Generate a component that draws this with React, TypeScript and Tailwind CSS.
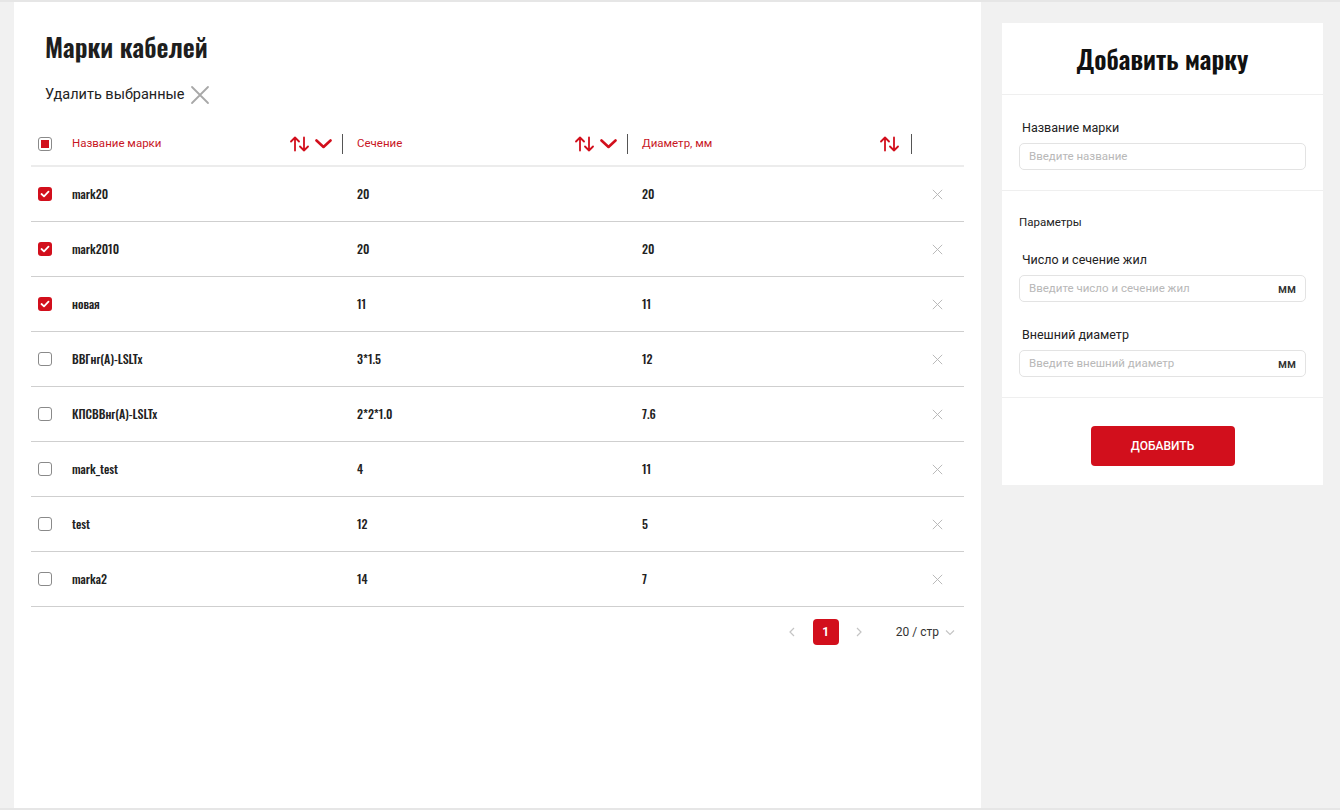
import React from "react";

const RED = "#d20f1c";

const rows = [
  { name: "mark20", section: "20", diam: "20", checked: true },
  { name: "mark2010", section: "20", diam: "20", checked: true },
  { name: "новая", section: "11", diam: "11", checked: true },
  { name: "ВВГнг(А)-LSLTx", section: "3*1.5", diam: "12", checked: false },
  { name: "КПСВВнг(А)-LSLTx", section: "2*2*1.0", diam: "7.6", checked: false },
  { name: "mark_test", section: "4", diam: "11", checked: false },
  { name: "test", section: "12", diam: "5", checked: false },
  { name: "marka2", section: "14", diam: "7", checked: false },
];

const condensed = {
  fontFamily: "Oswald, 'Liberation Sans Narrow', 'DejaVu Sans Condensed', sans-serif",
} as const;

function SortIcon() {
  return (
    <svg width="19" height="16" viewBox="0 0 19 16" fill="none" stroke={RED} strokeWidth="1.8" strokeLinecap="round" strokeLinejoin="round">
      <path d="M5 14.5V1.5M1 5.5L5 1.5L9 5.5" />
      <path d="M14 1.5V14.5M10 10.5L14 14.5L18 10.5" />
    </svg>
  );
}

function Chevron() {
  return (
    <svg width="17" height="10" viewBox="0 0 17 10" fill="none" stroke={RED} strokeWidth="2.6" strokeLinecap="round" strokeLinejoin="round">
      <path d="M1.5 1.5L8.5 8L15.5 1.5" />
    </svg>
  );
}

function Checkbox({ checked }: { checked: boolean }) {
  if (checked) {
    return (
      <span className="flex h-[14px] w-[14px] items-center justify-center rounded-[3px] bg-[#d20f1c]">
        <svg width="10" height="8" viewBox="0 0 10 8" fill="none" stroke="white" strokeWidth="1.8" strokeLinecap="round" strokeLinejoin="round">
          <path d="M1.5 4L4 6.3L8.5 1.7" />
        </svg>
      </span>
    );
  }
  return <span className="block h-[14px] w-[14px] rounded-[3px] border border-[#8a8a8a] bg-white" />;
}

function CloseIcon({ size, color, width }: { size: number; color: string; width: number }) {
  return (
    <svg width={size} height={size} viewBox="0 0 20 20" fill="none" stroke={color} strokeWidth={width} strokeLinecap="round">
      <path d="M2 2L18 18M18 2L2 18" />
    </svg>
  );
}

function Field({ label, placeholder, unit }: { label: string; placeholder: string; unit?: string }) {
  return (
    <div>
      <div className="pl-[3px] text-[12.5px] leading-[16px] text-[#222]">{label}</div>
      <div className="mt-[7px] flex h-[27px] items-center rounded-[5px] border border-[#e3e3e3] px-[9px]">
        <span className="flex-1 text-[11.5px] text-[#b8b8b8]">{placeholder}</span>
        {unit && <span className="text-[12px] font-medium text-[#333]">{unit}</span>}
      </div>
    </div>
  );
}

export default function App() {
  return (
    <div
      className="flex h-[810px] w-full border-y-2 border-[#e6e6e6] bg-[#f1f1f1]"
      style={{ fontFamily: "Roboto, Inter, 'Noto Sans', sans-serif" }}
    >
      <div className="ml-[14px] w-[967px] bg-white pl-[17px] pr-[17px]">
        <h1 className="ml-[14px] mt-[27px] text-[26px] font-semibold leading-[36px] text-[#1e1e1e]" style={condensed}>
          Марки кабелей
        </h1>
        <div className="ml-[14px] mt-[20px] flex items-center gap-[5px] text-[14.5px] leading-[20px] text-[#222]">
          <span>Удалить выбранные</span>
          <CloseIcon size={20} color="#a8a8a8" width={1.8} />
        </div>

        <div className="mt-[18px] w-[933px]">
          <div className="flex h-[44px] items-center border-b-2 border-[#ececec] text-[11.5px] text-[#c8161f]">
            <div className="flex w-[41px] pl-[7px]">
              <span className="flex h-[14px] w-[14px] items-center justify-center rounded-[3px] border border-[#8a8a8a]">
                <span className="block h-[8px] w-[8px] bg-[#d20f1c]" />
              </span>
            </div>
            <div className="flex w-[271px] items-center">
              <span className="flex-1">Название марки</span>
              <SortIcon />
              <span className="ml-[6px]"><Chevron /></span>
              <span className="ml-[10px] h-[20px] w-px bg-[#555]" />
            </div>
            <div className="ml-[14px] flex w-[271px] items-center">
              <span className="flex-1">Сечение</span>
              <SortIcon />
              <span className="ml-[6px]"><Chevron /></span>
              <span className="ml-[10px] h-[20px] w-px bg-[#555]" />
            </div>
            <div className="ml-[14px] flex w-[270px] items-center">
              <span className="flex-1">Диаметр, мм</span>
              <SortIcon />
              <span className="ml-[12px] h-[20px] w-px bg-[#555]" />
            </div>
          </div>

          {rows.map((r) => (
            <div
              key={r.name}
              className="flex h-[55px] items-center border-b border-[#cfcfcf] text-[12px] font-medium text-[#222]"
              style={condensed}
            >
              <div className="flex w-[41px] pl-[7px]">
                <Checkbox checked={r.checked} />
              </div>
              <div className="w-[285px]">{r.name}</div>
              <div className="w-[285px]">{r.section}</div>
              <div className="flex-1">{r.diam}</div>
              <div className="mr-[21px]">
                <CloseIcon size={11} color="#b5b5b5" width={1.7} />
              </div>
            </div>
          ))}

          <div className="mt-[12px] flex items-center justify-end pr-[9px] text-[12px]">
            <span className="text-[#c4c4c4]">
              <svg width="8" height="10" viewBox="0 0 8 10" fill="none" stroke="currentColor" strokeWidth="1.2"><path d="M6 1L2 5L6 9" /></svg>
            </span>
            <span className="ml-[17px] flex h-[26px] w-[26px] items-center justify-center rounded-[4px] bg-[#d20f1c] text-[12px] font-bold text-white">
              1
            </span>
            <span className="ml-[16px] text-[#c4c4c4]">
              <svg width="8" height="10" viewBox="0 0 8 10" fill="none" stroke="currentColor" strokeWidth="1.2"><path d="M2 1L6 5L2 9" /></svg>
            </span>
            <span className="ml-[33px] text-[#333]">20 / стр</span>
            <span className="ml-[6px] text-[#c4c4c4]">
              <svg width="10" height="7" viewBox="0 0 10 7" fill="none" stroke="currentColor" strokeWidth="1.1"><path d="M1 1.5L5 5.5L9 1.5" /></svg>
            </span>
          </div>
        </div>
      </div>

      <div className="ml-[21px] mt-[21px] h-[462px] w-[321px] self-start bg-white">
        <div className="flex h-[72px] items-center justify-center border-b border-[#efefef]">
          <h2 className="text-[26px] font-semibold text-[#111]" style={condensed}>
            Добавить марку
          </h2>
        </div>
        <div className="border-b border-[#efefef] px-[17px] pb-[20px] pt-[25px]">
          <Field label="Название марки" placeholder="Введите название" />
        </div>
        <div className="border-b border-[#efefef] px-[17px] pb-[20px] pt-[23px]">
          <div className="text-[11.5px] leading-[16px] text-[#222]">Параметры</div>
          <div className="mt-[22px]">
            <Field label="Число и сечение жил" placeholder="Введите число и сечение жил" unit="мм" />
          </div>
          <div className="mt-[25px]">
            <Field label="Внешний диаметр" placeholder="Введите внешний диаметр" unit="мм" />
          </div>
        </div>
        <div className="flex justify-center pt-[28px]">
          <button className="h-[40px] w-[144px] rounded-[4px] bg-[#d20f1c] text-[12px] font-medium text-white">
            ДОБАВИТЬ
          </button>
        </div>
      </div>
    </div>
  );
}
